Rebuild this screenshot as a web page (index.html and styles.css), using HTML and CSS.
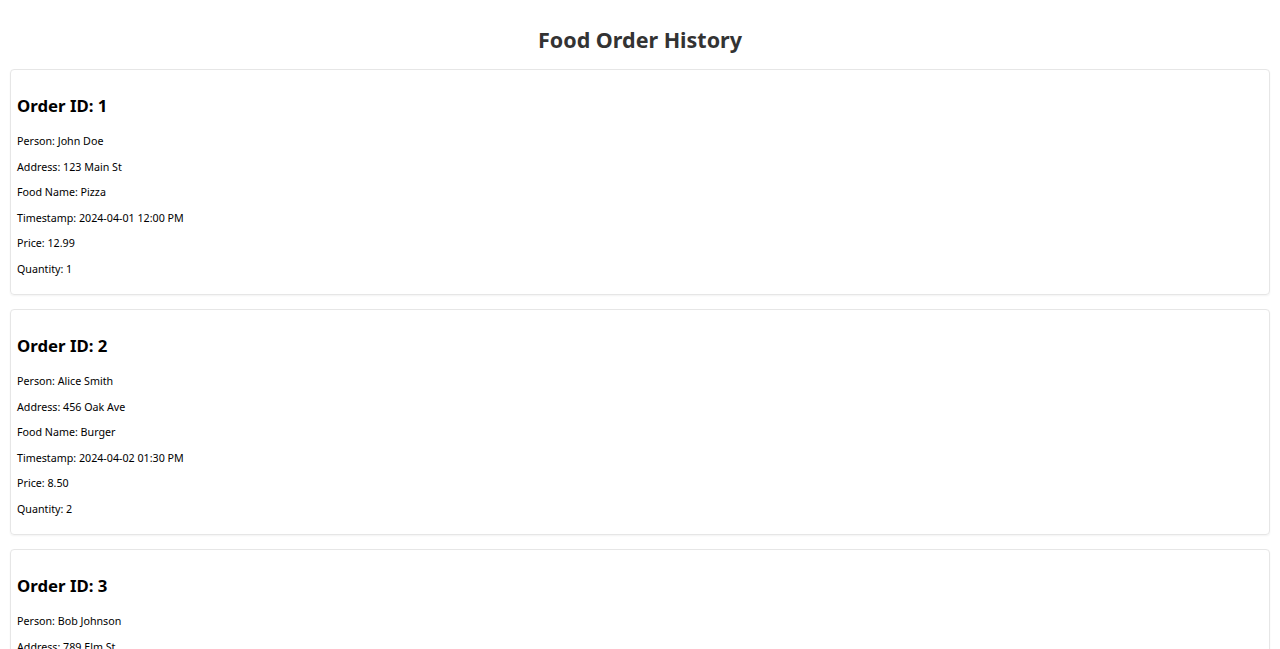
FILE: index.html
```html
<!DOCTYPE html>
<html>
<head>
<meta charset="utf-8">
<link rel="stylesheet" href="styles.css">
</head>
<body>
<div class="page">
  <h1 class="title">Food Order History</h1>
  <div class="order">
    <h3 class="order-id">Order ID: 1</h3>
    <p class="field">Person: John Doe</p>
    <p class="field">Address: 123 Main St</p>
    <p class="field">Food Name: Pizza</p>
    <p class="field">Timestamp: 2024-04-01 12:00 PM</p>
    <p class="field">Price: 12.99</p>
    <p class="field">Quantity: 1</p>
  </div>
  <div class="order">
    <h3 class="order-id">Order ID: 2</h3>
    <p class="field">Person: Alice Smith</p>
    <p class="field">Address: 456 Oak Ave</p>
    <p class="field">Food Name: Burger</p>
    <p class="field">Timestamp: 2024-04-02 01:30 PM</p>
    <p class="field">Price: 8.50</p>
    <p class="field">Quantity: 2</p>
  </div>
  <div class="order">
    <h3 class="order-id">Order ID: 3</h3>
    <p class="field">Person: Bob Johnson</p>
    <p class="field">Address: 789 Elm St</p>
    <p class="field">Food Name: Sushi</p>
    <p class="field">Timestamp: 2024-04-03 07:45 PM</p>
    <p class="field">Price: 22.00</p>
    <p class="field">Quantity: 3</p>
  </div>
</div>
</body>
</html>
```

FILE: styles.css
```css
html, body {
  margin: 0;
  padding: 0;
  background: #ffffff;
}
body {
  font-family: "Noto Sans", "Open Sans", sans-serif;
  color: #000;
}
.page {
  padding: 10px;
}
.title {
  margin: 14px 0 13px;
  font-size: 21.5px;
  line-height: 32px;
  font-weight: 700;
  color: #333333;
  text-align: center;
}
.order {
  border: 1px solid #e6e6e6;
  border-radius: 4px;
  padding: 6px 6px 5.4px;
  margin-bottom: 14px;
  box-shadow: 0 1px 2px rgba(0, 0, 0, 0.05);
}
.order-id {
  margin: 19px 0 18px;
  font-size: 16.8px;
  line-height: 22px;
  font-weight: 700;
}
.field {
  margin: 12px 0;
  font-size: 10.7px;
  line-height: 13.6px;
}
```
